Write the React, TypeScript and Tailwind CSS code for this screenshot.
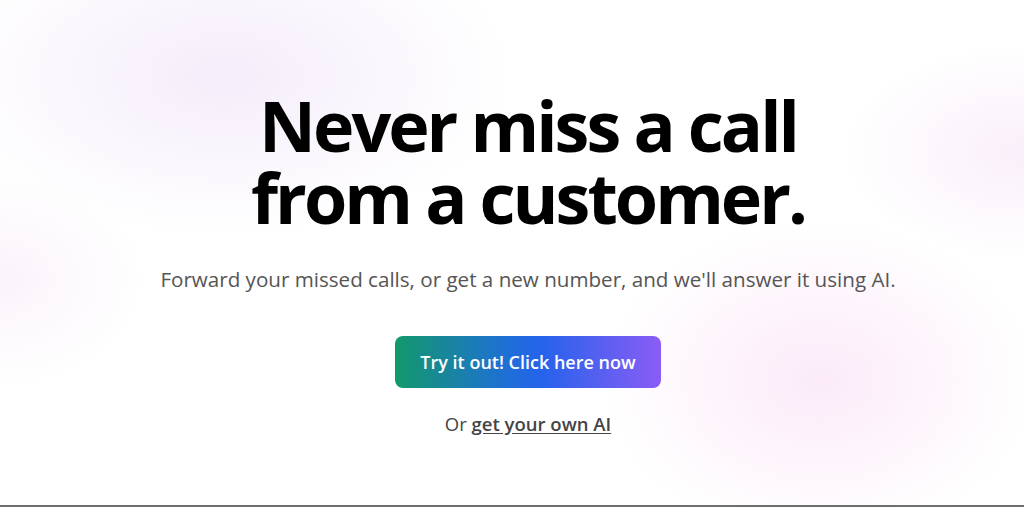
import React from "react";

export default function App() {
  return (
    <div
      className="relative w-full h-[507px] overflow-hidden bg-white"
      style={{ fontFamily: '"Open Sans", "Noto Sans", sans-serif' }}
    >
      <div className="absolute inset-0 bg-[radial-gradient(ellipse_40%_45%_at_22%_15%,rgba(236,222,246,0.55),transparent_70%)]" />
      <div className="absolute inset-0 bg-[radial-gradient(ellipse_30%_45%_at_80%_75%,rgba(250,226,246,0.7),transparent_70%)]" />
      <div className="absolute inset-0 bg-[radial-gradient(ellipse_25%_30%_at_100%_30%,rgba(246,228,246,0.6),transparent_70%)]" />
      <div className="absolute inset-0 bg-[radial-gradient(ellipse_20%_30%_at_0%_55%,rgba(246,232,246,0.5),transparent_70%)]" />
      <div className="relative flex flex-col items-center pt-[89px] pl-[32px]">
        <h1 className="text-center text-[70px] leading-[72px] font-bold tracking-[-3px] text-black">
          Never miss a call
          <br />
          from a customer.
        </h1>
        <p className="mt-[32px] text-[20.6px] leading-[28px] text-[#555]">
          Forward your missed calls, or get a new number, and we'll answer it using AI.
        </p>
        <button className="mt-[43px] w-[266px] h-[52px] rounded-lg bg-[linear-gradient(90deg,#12996b_0%,#1f6fd6_42%,#2563eb_55%,#8b5cf6_100%)] text-white text-[18px] font-semibold">
          Try it out! Click here now
        </button>
        <p className="mt-[24px] text-[18.5px] leading-[24px] text-[#444]">
          Or{" "}
          <a className="underline font-semibold underline-offset-2">get your own AI</a>
        </p>
      </div>
      <div className="absolute bottom-0 left-0 right-0 h-[2px] bg-[#6e6e6e]" />
    </div>
  );
}
